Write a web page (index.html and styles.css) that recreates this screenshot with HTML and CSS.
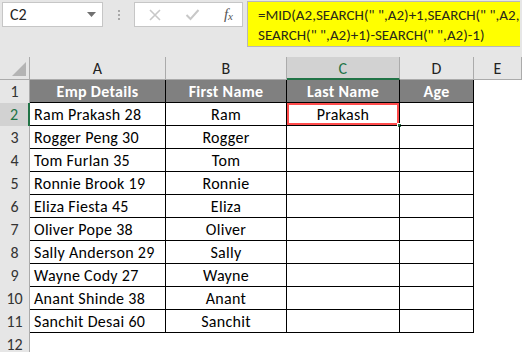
FILE: index.html
```html
<!DOCTYPE html>
<html lang="en">
<head>
  <meta charset="UTF-8" />
  <title>Last Name formula</title>
  <link rel="stylesheet" href="styles.css">
</head>
<body>
  <div class="formula-bar">
    <div class="name-box">
      <span>C2</span>
      <svg class="caret" width="9" height="5" viewBox="0 0 9 5"><path d="M0 0h9L4.5 5z" fill="#707070"/></svg>
    </div>
    <div class="grip"><i></i><i></i><i></i></div>
    <div class="buttons">
      <svg width="14" height="14" viewBox="0 0 14 14"><path d="M2 2l10 10M12 2L2 12" stroke="#c8c8c8" stroke-width="1.6"/></svg>
      <svg width="15" height="13" viewBox="0 0 15 13"><path d="M1.5 7l4 4L13.5 2" stroke="#c8c8c8" stroke-width="2" fill="none"/></svg>
      <span class="fx">f<sub>x</sub></span>
    </div>
    <div class="formula">=MID(A2,SEARCH(" ",A2)+1,SEARCH(" ",A2,<br>SEARCH(" ",A2)+1)-SEARCH(" ",A2)-1)</div>
  </div>

  <div class="sheet" id="sheet">
    <div class="ch corner"><span class="tri"></span></div>
    <div class="ch">A</div>
    <div class="ch">B</div>
    <div class="ch active">C</div>
    <div class="ch">D</div>
    <div class="ch">E</div>
  </div>

  <script>
    const people = [
      ["Ram Prakash 28", "Ram"],
      ["Rogger Peng 30", "Rogger"],
      ["Tom Furlan 35", "Tom"],
      ["Ronnie Brook 19", "Ronnie"],
      ["Eliza Fiesta 45", "Eliza"],
      ["Oliver Pope 38", "Oliver"],
      ["Sally Anderson 29", "Sally"],
      ["Wayne Cody 27", "Wayne"],
      ["Anant Shinde 38", "Anant"],
      ["Sanchit Desai 60", "Sanchit"]
    ];

    const sheet = document.getElementById("sheet");
    const rows = [["Emp Details", "First Name", "Last Name", "Age"]]
      .concat(people.map(p => [p[0], p[1], "", ""]));

    function cell(cls, text) {
      const d = document.createElement("div");
      d.className = cls;
      d.textContent = text;
      sheet.appendChild(d);
      return d;
    }

    rows.forEach((r, i) => {
      const n = i + 1;
      cell(n === 2 ? "rh active" : "rh", n);
      r.forEach((v, c) => {
        let cls = "t";
        if (i === 0) cls += " head";
        else if (c === 0) cls += " first";
        cell(cls, v);
      });
      cell("e", "");
    });

    cell("rh", 12);
    for (let c = 0; c < 5; c++) cell("e", "");

    // highlight C2 with its result
    const c2 = sheet.children[6 + 6 + 3];
    c2.textContent = "Prakash";
    c2.classList.add("selected");
    const handle = document.createElement("span");
    handle.className = "handle";
    c2.appendChild(handle);
  </script>
</body>
</html>
```

FILE: styles.css
```css
* {
  box-sizing: border-box;
  margin: 0;
  padding: 0;
}

body {
  width: 522px;
  height: 352px;
  overflow: hidden;
  background-color: #e6e6e6;
  font-family: Calibri, Carlito, 'Lato', sans-serif;
  font-size: 15px;
  color: #000;
}

.formula-bar {
  display: flex;
  align-items: flex-start;
  padding: 2px 2px 0 2px;
  height: 57px;
}

.name-box {
  width: 101px;
  height: 25px;
  background: white;
  border: 1px solid #c6c6c6;
  display: flex;
  align-items: center;
  justify-content: space-between;
  padding: 0 6px 0 7px;
  color: #222;
  font-size: 16px;
}

.grip {
  width: 31px;
  height: 25px;
  display: flex;
  flex-direction: column;
  align-items: center;
  justify-content: center;
  gap: 2px;
}

.grip i {
  width: 2px;
  height: 2px;
  background: #a8a8a8;
}

.buttons {
  width: 109px;
  height: 25px;
  background: white;
  border: 1px solid #c6c6c6;
  display: flex;
  align-items: center;
  justify-content: space-between;
  padding: 0 9px 0 13px;
}

.fx {
  font-family: 'Liberation Serif', serif;
  font-style: italic;
  font-size: 15px;
  color: #555;
}

.fx sub {
  font-size: 11px;
  vertical-align: -1px;
}

.formula {
  margin-left: 4px;
  width: 273px;
  height: 46px;
  margin-top: -1px;
  background: #ffff00;
  border: 1px solid #b8b8b8;
  border-right: none;
  padding: 3px 0 0 10px;
  line-height: 20px;
  color: #2a2a1a;
  white-space: nowrap;
  overflow: hidden;
}

.sheet {
  display: grid;
  grid-template-columns: 30px 136px 121px 113px 74px 48px;
  grid-auto-rows: 23px;
  background: white;
  font-size: 16px;
  letter-spacing: 0.3px;
}

.sheet > div {
  display: flex;
  align-items: center;
  justify-content: center;
  white-space: nowrap;
  position: relative;
}

.ch {
  background: #e6e6e6;
  border-right: 1px solid #ababab;
  border-bottom: 1px solid #ababab;
  color: #222;
  padding-top: 1px;
}

.ch.active {
  background: #d2d2d2;
  color: #217346;
  border-bottom: 2px solid #217346;
}

.corner {
  justify-content: flex-end;
}

.tri {
  position: absolute;
  right: 3px;
  bottom: 3px;
  width: 0;
  height: 0;
  border-left: 14px solid transparent;
  border-bottom: 14px solid #b4b4b4;
}

.rh {
  background: #e6e6e6;
  border-right: 1px solid #ababab;
  color: #333;
  letter-spacing: 0;
}

.rh.active {
  background: #d2d2d2;
  color: #217346;
  border-right: 2px solid #217346;
}

.t {
  border-right: 1px solid #000;
  border-bottom: 1px solid #000;
}

.t.first {
  justify-content: flex-start;
  padding-left: 4px;
}

.t.head {
  background: #808080;
  color: white;
  font-weight: bold;
}

.e {
  background: white;
}

.selected {
  box-shadow: inset 0 0 0 2px #ff4b4b;
}

.handle {
  position: absolute;
  right: -3px;
  bottom: -3px;
  width: 5px;
  height: 5px;
  background: #217346;
  border: 1px solid white;
}
```
